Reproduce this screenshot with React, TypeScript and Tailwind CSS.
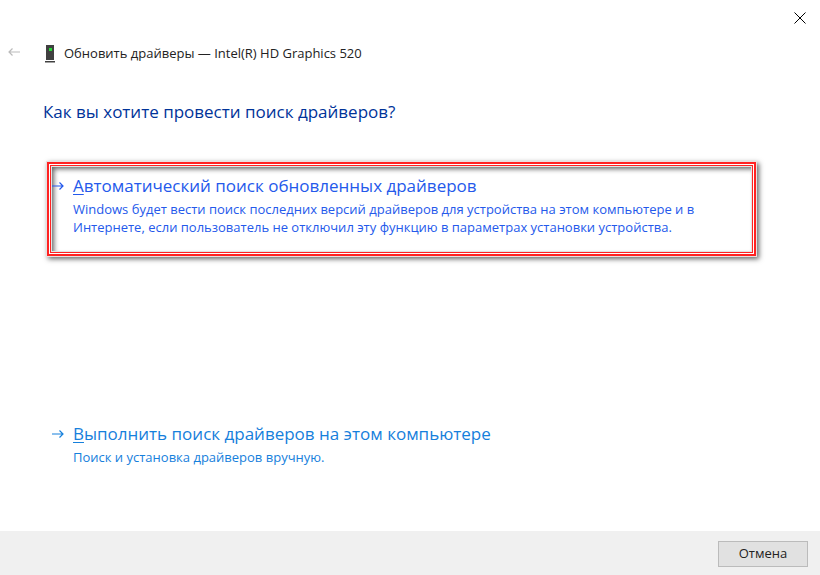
import React from "react";

function Arrow({ className }: { className: string }) {
  return (
    <svg viewBox="0 0 12 10" className={className} fill="none" stroke="currentColor" strokeWidth="1.2" aria-hidden="true">
      <path d="M0 5h11M7.5 1.5 11 5 7.5 8.5" />
    </svg>
  );
}

type OptionProps = { accessKey: string; title: string; text: string; className: string };

function Option({ accessKey, title, text, className }: OptionProps) {
  return (
    <button className={`flex w-full items-start gap-[9px] text-left ${className}`}>
      <Arrow className="mt-[7px] h-2.5 w-3 shrink-0" />
      <span className="flex flex-col gap-0.5">
        <span className="text-[17px] leading-6">
          <span className="underline decoration-1 underline-offset-2">{accessKey}</span>{title}
        </span>
        <span className="max-w-[640px] text-[13px] leading-[18px]">{text}</span>
      </span>
    </button>
  );
}

export default function App() {
  return (
    <main className="flex min-h-screen flex-col bg-white font-['Open_Sans','Noto_Sans',sans-serif] text-[13px] text-[#222]">
      <div className="flex h-9 justify-end">
        <button aria-label="Закрыть" className="flex w-10 items-center justify-center text-black">
          <svg viewBox="0 0 12 12" className="size-3" fill="none" stroke="currentColor" strokeWidth="1"><path d="m.5.5 11 11M11.5.5l-11 11" /></svg>
        </button>
      </div>
      <header className="flex h-9 items-center gap-6 pl-2">
        <button aria-label="Назад" className="pb-1 text-[#bbb]"><Arrow className="h-2.5 w-3 rotate-180" /></button>
        <div className="flex items-center gap-2">
          <svg viewBox="0 0 12 18" className="h-[18px] w-3" aria-hidden="true">
            <path d="M2 0h8v15H2z" fill="#404040" />
            <path d="M1 16h10v1.5H1z" fill="#404040" />
            <path d="M5 3h3v3H5z" fill="#28d838" />
          </svg>
          <span>Обновить драйверы — Intel(R) HD Graphics 520</span>
        </div>
      </header>
      <section className="flex flex-1 flex-col px-[43px] pt-6">
        <h1 className="text-[17px] leading-8 text-[#003399]">Как вы хотите провести поиск драйверов?</h1>
        <div className="mt-[34px] mr-[21px] ml-1 h-[94px] border-2 border-[#ff2222] bg-white p-px shadow-[0_0_0_1px_#e8e0e0,2px_2px_5px_1px_#666]">
          <div className="h-full border border-[#ff2222] pt-2 pl-px shadow-[inset_0_0_0_1px_#e4e4e4,inset_3px_3px_5px_#666]">
            <Option accessKey="А" title="втоматический поиск обновленных драйверов" text="Windows будет вести поиск последних версий драйверов для устройства на этом компьютере и в Интернете, если пользователь не отключил эту функцию в параметрах установки устройства." className="text-[#2459eb]" />
          </div>
        </div>
        <div className="mt-[166px] pb-10 pl-[9px]">
          <Option accessKey="В" title="ыполнить поиск драйверов на этом компьютере" text="Поиск и установка драйверов вручную." className="text-[#1680dc]" />
        </div>
      </section>
      <footer className="flex h-11 items-center justify-end bg-[#f0f0f0] px-3 pt-0.5">
        <button className="h-[26px] w-[90px] border border-[#bbb] bg-[#e1e1e1]">Отмена</button>
      </footer>
    </main>
  );
}
